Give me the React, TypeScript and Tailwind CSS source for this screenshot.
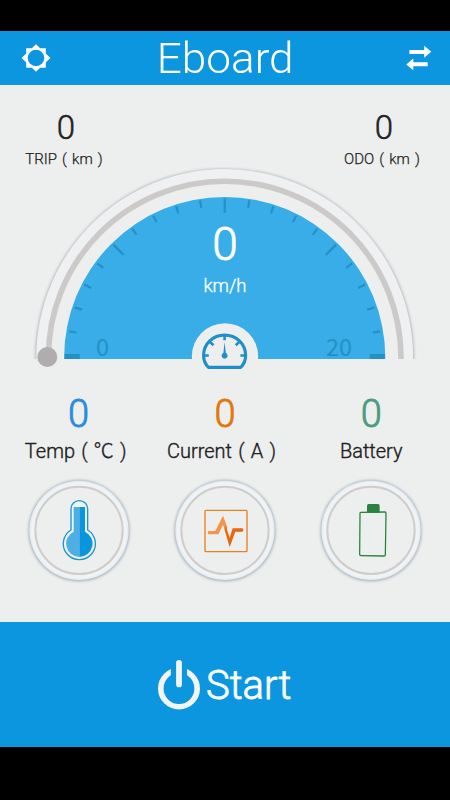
import React from "react";

const CX = 224.7;
const CY = 356;

function Tick({ index }: { index: number }) {
  const angle = (index * 9 * Math.PI) / 180;
  const end = index === 0 || index === 20;
  const major = index % 5 === 0;
  const outer = end ? 160 : 157.5;
  const inner = end ? 145 : major ? 143 : 150;
  const y = end ? 356.5 : CY;
  return (
    <line
      x1={CX - outer * Math.cos(angle)}
      y1={y - outer * Math.sin(angle)}
      x2={CX - inner * Math.cos(angle)}
      y2={y - inner * Math.sin(angle)}
      stroke="#2590c6"
      strokeWidth={end ? 5 : 2.2}
    />
  );
}

function Gauge() {
  return (
    <div className="relative h-[205px] w-full shrink-0">
      <svg className="block" width="450" height="205" viewBox="0 167 450 205">
        <defs>
          <clipPath id="half">
            <rect x="0" y="160" width="450" height="199" />
          </clipPath>
          <filter id="rimShadow" x="-10%" y="-10%" width="120%" height="120%">
            <feGaussianBlur stdDeviation="1.6" />
          </filter>
        </defs>
        <g clipPath="url(#half)">
          <circle cx={CX} cy="358" r="189.3" fill="#b4b3b8" filter="url(#rimShadow)" />
          <circle cx={CX} cy="357.5" r="188.4" fill="#eef0f2" />
          <circle cx={CX} cy="357.5" r="179" fill="#edefee" />
          <circle cx={CX} cy="357.5" r="176.3" fill="none" stroke="#cccac9" strokeWidth="5.6" />
          <circle cx={CX} cy="357.5" r="161.5" fill="#f0f2f1" />
          <circle cx={CX} cy="357.5" r="160.6" fill="#38ade8" />
          {Array.from({ length: 21 }, (_, i) => (
            <Tick key={i} index={i} />
          ))}
        </g>
        <circle cx="225" cy="356.5" r="33.2" fill="#edefee" />
        <g fill="none" stroke="#1f8fc9" strokeWidth="3.2">
          <path d="M208.5 367.3 C205 364 203.6 360 203.6 355.5 C203.6 343.5 213 335.2 224.6 335.2 C236.2 335.2 245.6 343.5 245.6 355.5 C245.6 360 244.2 364 240.7 367.3 Z" strokeLinejoin="round" />
          <path d="M224.6 336v4.2M205 355.5h3.8M240.4 355.5h3.8M210 342l3.5 3.2M239.2 342l-3.5 3.2" strokeWidth="2.6" />
        </g>
        <path d="M224.6 342 L223.4 353 A3 3 0 1 0 225.8 353 Z" fill="#1f8fc9" />
        <circle cx="47.3" cy="357" r="10" fill="#b0adae" />
      </svg>
      <div className="absolute inset-x-0 top-[50px] text-center text-[46px] font-light leading-[54px] text-white [-webkit-text-stroke:0.8px]">0</div>
      <div className="absolute inset-x-0 top-[107px] text-center text-[18.5px] font-light leading-[24px] text-white [-webkit-text-stroke:0.35px]">km/h</div>
      <div className="absolute left-[96px] top-[165px] font-['Noto_Sans_CJK_SC',sans-serif] text-[23.5px] leading-[28px] text-[#258fc7]">0</div>
      <div className="absolute left-[326px] top-[165px] font-['Noto_Sans_CJK_SC',sans-serif] text-[23.5px] leading-[28px] text-[#258fc7]">20</div>
    </div>
  );
}

function Dial({ children }: { children: React.ReactNode }) {
  return (
    <svg className="block" width="120" height="120" viewBox="0 0 360 360">
      <defs>
        <filter id="dialShadow" x="-10%" y="-10%" width="120%" height="120%">
          <feGaussianBlur stdDeviation="4" />
        </filter>
      </defs>
      <circle cx="180" cy="182" r="151" fill="#a0a7ad" filter="url(#dialShadow)" />
      <circle cx="180" cy="181" r="149" fill="#e2edf6" />
      <circle cx="180" cy="181" r="145" fill="#f0f2f4" />
      <circle cx="180" cy="181" r="131" fill="#edefee" stroke="#cecccd" strokeWidth="6" />
      {children}
    </svg>
  );
}

function Thermometer() {
  return (
    <g transform="translate(2 0)">
      <path
        d="M154 180 V116 A25 24 0 0 1 204 116 V180 A48 48 0 1 1 154 180 Z"
        fill="#f0f3f4"
        stroke="#1b93d6"
        strokeWidth="4"
      />
      <path d="M162 111 H179 V261 A40 40 0 0 1 162 185 Z" fill="#4eafe4" />
      <path d="M179 111 H196 V185 A40 40 0 0 1 179 261 Z" fill="#0895de" />
    </g>
  );
}

function Pulse() {
  return (
    <g transform="translate(2 0)" fill="none">
      <rect x="118" y="121" width="126" height="124" rx="3" stroke="#e7801f" strokeWidth="4" />
      <path d="M130 183 H149 L172 137 L185 172 L180 189 L172 164 L158 193 H130 Q126 193 126 188 Q126 183 130 183 Z" fill="#f39448" />
      <path d="M180 168 L192 203 L201 175 H229 Q233 175 233 180 Q233 185 229 185 H209 L192 232 L177 180 Z" fill="#e9660c" />
    </g>
  );
}

function BatteryIcon() {
  return (
    <g transform="translate(-5 -1)">
      <path d="M154 128 L227 127 Q230 127 230 131 L228 255 Q228 259 224 259 L155 258 Q151 258 151 254 L152 132 Q152 128 154 128 Z" fill="none" stroke="#24843a" strokeWidth="3.8" />
      <path d="M178 103 H206 Q211 103 211 109 V129 H173 V109 Q173 103 178 103 Z" fill="#2c8041" />
    </g>
  );
}

function Stat({ color, label, shift, children }: { color: string; label: string; shift: string; children: React.ReactNode }) {
  return (
    <div className="flex w-[146.3px] flex-col items-center">
      <div className={`mt-[20px] h-[44px] text-[38px] font-light leading-[44px] [-webkit-text-stroke:0.8px] ${color}`}>0</div>
      <div className={`mt-[3px] h-[24px] whitespace-pre text-[20px] font-light leading-[24px] text-[#202020] [-webkit-text-stroke:0.35px] [word-spacing:1.3px] ${shift}`}>{label}</div>
      <div className="mt-[7px]">{children}</div>
    </div>
  );
}

function Distance({ label }: { label: string }) {
  return (
    <div className="flex w-[80px] flex-col items-center text-[#222]">
      <div className="mt-[25px] h-[36px] pl-[4px] text-[33px] font-light leading-[36px] [-webkit-text-stroke:0.5px]">0</div>
      <div className="mt-[3px] h-[20px] whitespace-pre text-[15px] font-light leading-[20px] [-webkit-text-stroke:0.25px] [word-spacing:1.5px]">{label}</div>
    </div>
  );
}

export default function App() {
  return (
    <div className="flex h-[800px] w-[450px] flex-col overflow-hidden bg-black font-[Roboto,'Noto_Sans_CJK_SC',sans-serif]">
      <header className="mt-[31px] flex h-[54px] shrink-0 items-center justify-between bg-[#0b96df] pl-[21px] pr-[18px]">
        <svg width="30" height="30" viewBox="0 0 30 30">
          <path
            fill="#fff"
            fillRule="evenodd"
            d="M15 1.3 L19.2 5.3 H24.8 V10.6 L29.4 15 L24.8 19.4 V24.8 H19.2 L15 28.8 L10.8 24.8 H5.2 V19.4 L.6 15 L5.2 10.6 V5.3 H10.8 Z M15 6.7 A8.3 8.3 0 1 0 15 23.3 A8.3 8.3 0 1 0 15 6.7 Z"
          />
        </svg>
        <div className="mr-[7px] flex h-[54px] w-[140px] items-center justify-center">
          <h1 className="origin-center scale-x-[1.05] pt-[2px] text-[42px] font-light leading-[54px] text-white">Eboard</h1>
        </div>
        <svg width="26" height="26" viewBox="0 0 26 26" fill="#fff">
          <path d="M3.4 5 H18.2 V.8 L25.3 6.8 L18.2 12.8 V9 H3.4 Z" />
          <path d="M21.7 17.3 H7.3 V13.5 L.3 19.4 L7.3 25.3 V21.3 H21.7 Z" />
        </svg>
      </header>

      <main className="flex h-[537px] shrink-0 flex-col bg-[#edeeee]">
        <section className="flex h-[82px] shrink-0 justify-between pl-[24px] pr-[28px]">
          <Distance label="TRIP ( km )" />
          <Distance label="ODO ( km )" />
        </section>
        <Gauge />
        <section className="flex shrink-0 pl-[5.5px]">
          <Stat color="text-[#268ce0]" label="Temp ( ℃ )" shift="pr-[6px]">
            <Dial><Thermometer /></Dial>
          </Stat>
          <Stat color="text-[#e27609]" label="Current ( A )" shift="pr-[7px]">
            <Dial><Pulse /></Dial>
          </Stat>
          <Stat color="text-[#4b9b80]" label="Battery" shift="pr-0">
            <Dial><BatteryIcon /></Dial>
          </Stat>
        </section>
      </main>

      <button className="flex h-[125px] shrink-0 items-center bg-[#0b96df] pl-[157px] text-white">
        <svg width="44" height="52" viewBox="0 0 44 52" fill="none" stroke="#f2f4f5">
          <circle cx="22" cy="29.5" r="18.2" strokeWidth="5.6" />
          <rect x="13.8" y="5" width="16.2" height="14" fill="#0b96df" stroke="none" />
          <path d="M22 4 V25.4" strokeWidth="5.8" strokeLinecap="round" />
        </svg>
        <span className="ml-[5px] pt-[3px] text-[40px] font-light leading-[48px] [-webkit-text-stroke:0.8px]">Start</span>
      </button>
    </div>
  );
}
